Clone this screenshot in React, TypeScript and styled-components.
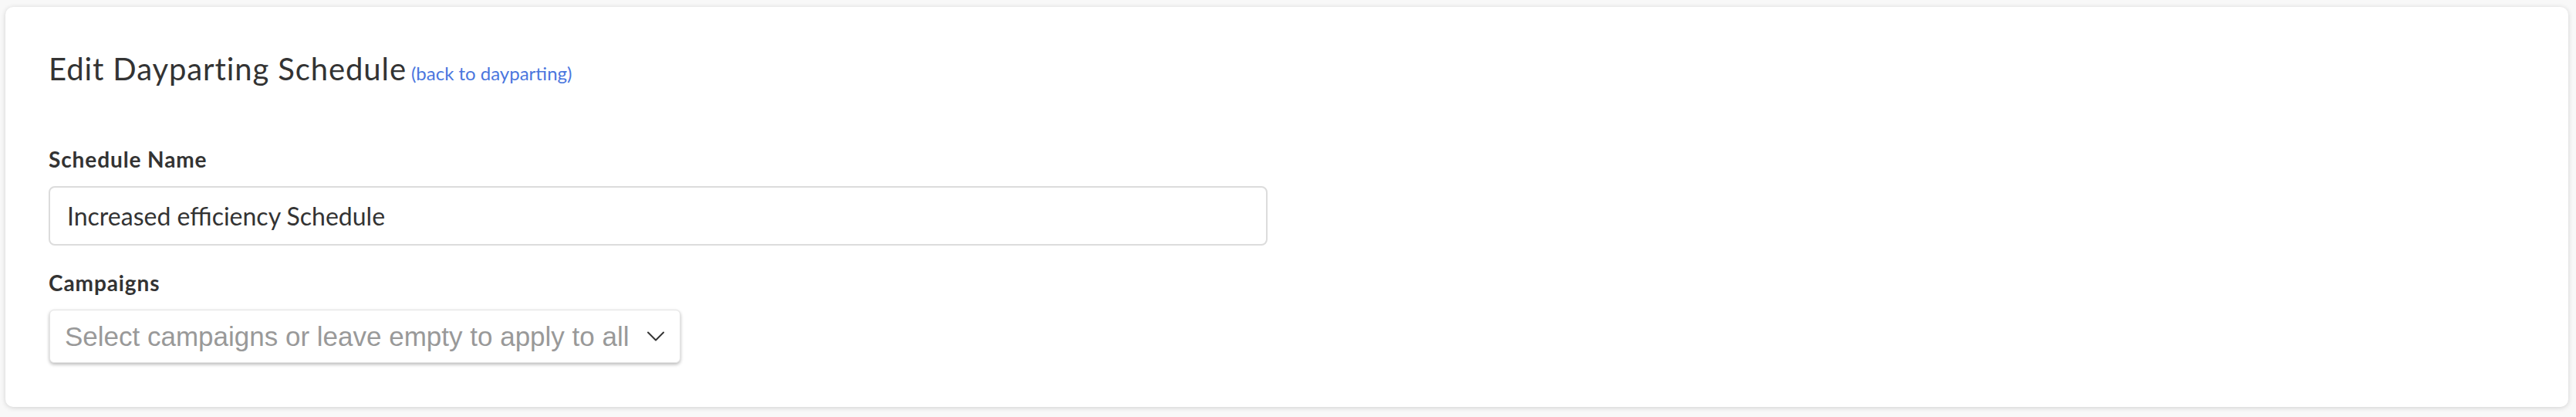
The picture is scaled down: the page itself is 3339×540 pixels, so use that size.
import React from 'react';
import styled, { createGlobalStyle } from 'styled-components';

const GlobalStyle = createGlobalStyle`
  html, body {
    margin: 0;
    padding: 0;
    background: #f8f8f8;
  }
  body {
    font-family: Lato, "Open Sans", sans-serif;
    color: #333;
  }
`;

const Page = styled.div`
  padding: 9px 10px 12px 7px;
`;

const Card = styled.section`
  background: #fff;
  border-radius: 10px;
  box-shadow: 0 1px 6px rgba(0, 0, 0, 0.16);
  padding: 56px 56px 57px;
`;

const TitleRow = styled.div`
  display: flex;
  align-items: baseline;
  gap: 6px;
  margin-bottom: 77px;
`;

const Title = styled.h2`
  margin: 0;
  font-size: 40px;
  font-weight: 400;
  line-height: 1.2;
  letter-spacing: 0.9px;
  color: #333;
`;

const BackLink = styled.a`
  font-size: 24px;
  line-height: 1.2;
  color: #4a76de;
  text-decoration: none;
  cursor: pointer;
`;

const Field = styled.div<{ $gap?: number }>`
  display: flex;
  flex-direction: column;
  margin-bottom: ${({ $gap }) => $gap ?? 0}px;
`;

const Label = styled.label`
  font-size: 28px;
  font-weight: 700;
  line-height: 1.15;
  letter-spacing: 0.9px;
  color: #333;
  margin-bottom: 19px;
`;

const TextInput = styled.input`
  box-sizing: border-box;
  width: 1580px;
  height: 77px;
  padding: 0 22px;
  border: 2px solid #dcdcdc;
  border-radius: 8px;
  font-family: Lato, "Open Sans", sans-serif;
  font-size: 32px;
  color: #333;
  outline: none;
`;

const Select = styled.div`
  box-sizing: border-box;
  width: 818px;
  height: 69px;
  margin-left: 1px;
  padding: 0 20px 0 19px;
  display: flex;
  align-items: center;
  justify-content: space-between;
  border: 1px solid #e4e4e4;
  border-radius: 6px;
  box-shadow: 0 2px 4px rgba(0, 0, 0, 0.28);
  background: #fff;
  cursor: pointer;
`;

const Placeholder = styled.span`
  font-family: "Liberation Sans", Arial, sans-serif;
  font-size: 35px;
  color: #999;
`;

const Chevron = () => (
  <svg width="22" height="13" viewBox="0 0 22 13" fill="none">
    <path d="M1 1.5 L11 11.5 L21 1.5" stroke="#333" strokeWidth="2" strokeLinecap="round" strokeLinejoin="round" />
  </svg>
);

export default function App() {
  return (
    <>
      <GlobalStyle />
      <Page>
        <Card>
          <TitleRow>
            <Title>Edit Dayparting Schedule</Title>
            <BackLink>(back to dayparting)</BackLink>
          </TitleRow>
          <Field $gap={32}>
            <Label>Schedule Name</Label>
            <TextInput defaultValue="Increased efficiency Schedule" />
          </Field>
          <Field>
            <Label>Campaigns</Label>
            <Select>
              <Placeholder>Select campaigns or leave empty to apply to all</Placeholder>
              <Chevron />
            </Select>
          </Field>
        </Card>
      </Page>
    </>
  );
}
